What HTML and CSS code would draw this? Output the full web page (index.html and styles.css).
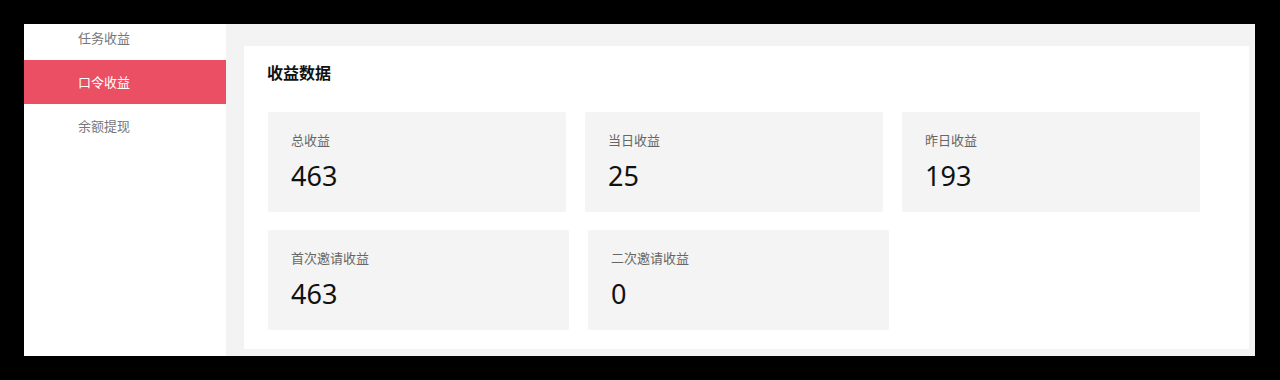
FILE: index.html
```html
<!DOCTYPE html>
<html lang="zh-CN">

<head>
  <title>收益数据</title>
  <meta charset="utf-8">
  <meta name="viewport" content="width=device-width, initial-scale=1">
  <link rel="stylesheet" href="styles.css">
</head>

<body>

  <div class="frame">

    <div class="sidebar">
      <ul class="menu">
        <li class="menu-item">任务收益</li>
        <li class="menu-item active">口令收益</li>
        <li class="menu-item">余额提现</li>
      </ul>
    </div>

    <div class="main">
      <div class="panel">
        <div class="panel-title">收益数据</div>

        <div class="card-row">
          <div class="stat-card">
            <div class="stat-label">总收益</div>
            <div class="stat-value">463</div>
          </div>
          <div class="stat-card">
            <div class="stat-label">当日收益</div>
            <div class="stat-value">25</div>
          </div>
          <div class="stat-card">
            <div class="stat-label">昨日收益</div>
            <div class="stat-value">193</div>
          </div>
        </div>

        <div class="card-row card-row-wide">
          <div class="stat-card">
            <div class="stat-label">首次邀请收益</div>
            <div class="stat-value">463</div>
          </div>
          <div class="stat-card">
            <div class="stat-label">二次邀请收益</div>
            <div class="stat-value">0</div>
          </div>
        </div>
      </div>
    </div>

  </div>

</body>

</html>
```

FILE: styles.css
```css
    html, body {
      margin: 0;
      padding: 0;
      background-color: #000;
      height: 380px;
      overflow: hidden;
      font-family: "Noto Sans", "Noto Sans CJK SC", sans-serif;
    }

    .frame {
      margin: 24px 0 0 24px;
      width: 1231px;
      height: 332px;
      display: flex;
      background: #f3f3f3;
    }

    .sidebar {
      width: 202px;
      background: #fff;
      overflow: hidden;
    }

    .menu {
      list-style: none;
      margin: -8px 0 0 0;
      padding: 0;
    }

    .menu-item {
      height: 44px;
      line-height: 44px;
      padding-left: 54px;
      font-size: 13px;
      color: #777;
    }

    .menu-item.active {
      background: #ea4f64;
      color: #fff;
    }

    .main {
      flex: 1;
      padding: 22px 6px 7px 18px;
    }

    .panel {
      background: #fff;
      height: 100%;
      box-sizing: border-box;
      padding: 15px 0 18px 24px;
    }

    .panel-title {
      font-size: 16px;
      line-height: 24px;
      font-weight: bold;
      color: #111;
      margin: 0 0 27px -1px;
    }

    .card-row {
      display: flex;
      gap: 19px;
    }

    .card-row + .card-row {
      margin-top: 18px;
    }

    .stat-card {
      width: 298px;
      height: 100px;
      box-sizing: border-box;
      background: #f4f4f4;
      border-radius: 2px;
      padding: 18px 0 0 23px;
    }

    .card-row-wide .stat-card {
      width: 301px;
    }

    .stat-label {
      font-size: 13px;
      line-height: 20px;
      color: #666;
    }

    .stat-value {
      margin-top: 8px;
      font-size: 27px;
      line-height: 36px;
      color: #111;
    }
```
